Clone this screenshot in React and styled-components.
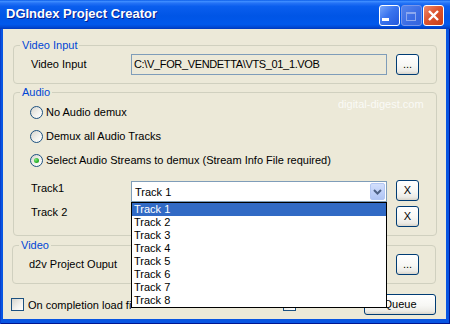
import React from "react";
import styled, { createGlobalStyle } from "styled-components";

const GlobalStyle = createGlobalStyle`
  html, body { margin: 0; padding: 0; background: #ffffff; }
  body { width: 450px; height: 324px; overflow: hidden; }
  *, *::before, *::after { box-sizing: border-box; }
`;

const Window = styled.div`
  position: relative;
  width: 450px;
  height: 324px;
  display: flex;
  flex-direction: column;
  font-family: "Liberation Sans", Arial, sans-serif;
  font-size: 11px;
  color: #000;
`;

const TitleBar = styled.div`
  height: 29px;
  flex: none;
  display: flex;
  align-items: flex-start;
  padding: 0 6px 0 6px;
  background: linear-gradient(
    180deg,
    #0A5CE8 0%,
    #3D8CFF 5%,
    #2472F6 11%,
    #0A5EEE 22%,
    #0055E6 55%,
    #0058EC 84%,
    #004AD6 93%,
    #0038BC 100%
  );
`;

const Title = styled.div`
  flex: 1;
  color: #ffffff;
  font-weight: bold;
  font-size: 13px;
  line-height: 28px;
  text-shadow: 1px 1px 0 #0A1F8E;
  white-space: nowrap;
`;

const Caption = styled.div`
  display: flex;
  gap: 1px;
  padding-top: 5px;
`;

const CapButton = styled.div`
  width: 21px;
  height: 21px;
  border-radius: 3px;
  border: 1px solid ${(p) => (p.$disabled ? "#7896EA" : "#FFFFFF")};
  background: ${(p) =>
    p.$close
      ? "linear-gradient(135deg, #EE8A6E 0%, #DD5530 45%, #C93E17 100%)"
      : p.$disabled
      ? "linear-gradient(135deg, #5584EC 0%, #3B6CE4 60%, #3364DE 100%)"
      : "linear-gradient(135deg, #78A6FA 0%, #3A74EE 45%, #2358DC 100%)"};
  display: flex;
  align-items: center;
  justify-content: center;
  svg { display: block; }
`;

const Frame = styled.div`
  flex: 1;
  display: flex;
  padding: 0 4px 5px 3px;
  background: #0855E2;
  box-shadow: inset 1px 0 0 #0A3FCC, inset -1px 0 0 #00158F, inset 0 -1px 0 #00158F;
`;

const Client = styled.div`
  flex: 1;
  background: #ECE9D8;
  display: flex;
  flex-direction: column;
  padding: 9px 9px 0 10px;
`;

const Group = styled.fieldset`
  margin: ${(p) => p.$mt || 0}px ${(p) => p.$mr || 0}px 0 ${(p) => p.$ml || 0}px;
  padding: 0;
  min-width: 0;
  border: 1px solid #D0D0BF;
  border-radius: 4px;
`;

const Legend = styled.legend`
  margin-left: 6px;
  padding: 0 2px;
  line-height: 14px;
  font-size: 11px;
  color: #0046D5;
`;

const GroupBody = styled.div`
  display: flex;
  flex-direction: column;
  padding: ${(p) => p.$pad};
`;

const FieldRow = styled.div`
  display: flex;
  align-items: center;
  height: 21px;
`;

const Label = styled.span`
  flex: none;
  width: ${(p) => p.$w || 100}px;
  line-height: 13px;
  margin-top: ${(p) => p.$mt || 0}px;
  white-space: nowrap;
`;

const TextBox = styled.div`
  flex: none;
  width: 256px;
  height: 21px;
  border: 1px solid #7F9DB9;
  background: ${(p) => (p.$readOnly ? "#ECE9D8" : "#FFFFFF")};
  padding: 0 2px;
  line-height: 19px;
  letter-spacing: -0.35px;
  white-space: nowrap;
  overflow: hidden;
`;

const XPButton = styled.button`
  flex: none;
  width: ${(p) => p.$w || 23}px;
  height: 21px;
  margin-left: ${(p) => (p.$ml === undefined ? 9 : p.$ml)}px;
  padding: 0;
  border: 1px solid #003C74;
  border-radius: 3px;
  background: linear-gradient(180deg, #FFFFFF 0%, #F7F7F4 55%, #ECEBE6 85%, #D8D4CA 100%);
  font-family: "Liberation Sans", Arial, sans-serif;
  font-size: 11px;
  line-height: 19px;
  color: #000;
  text-align: center;
`;

const RadioRow = styled.label`
  display: flex;
  align-items: center;
  gap: 3px;
  height: 24px;
  white-space: nowrap;
`;

const RadioCircle = styled.span`
  flex: none;
  width: 13px;
  height: 13px;
  border-radius: 50%;
  border: 1px solid #1C5180;
  background: linear-gradient(135deg, #D6D5CE 0%, #F3F3EF 60%, #FFFFFF 100%);
  display: flex;
  align-items: center;
  justify-content: center;
  &::after {
    content: "";
    display: ${(p) => (p.$checked ? "block" : "none")};
    width: 5px;
    height: 5px;
    border-radius: 50%;
    background: radial-gradient(circle at 35% 35%, #7EE87E 0%, #2FB52F 55%, #16881A 100%);
  }
`;

const TrackRow = styled.div`
  display: flex;
  align-items: flex-start;
  height: 22px;
  margin-top: ${(p) => p.$mt}px;
  padding-left: 1px;
`;

const ComboWrap = styled.div`
  position: relative;
  flex: none;
  width: 256px;
  margin-top: 1px;
`;

const Combo = styled.div`
  display: flex;
  align-items: center;
  height: 21px;
  border: 1px solid #7F9DB9;
  background: #FFFFFF;
  padding: 0 1px 0 3px;
`;

const ComboText = styled.span`
  flex: 1;
  white-space: nowrap;
`;

const ComboArrow = styled.span`
  flex: none;
  width: 15px;
  height: 17px;
  border-radius: 2px;
  border: 1px solid #B3C7F3;
  background: linear-gradient(180deg, #D3DFFC 0%, #BDCFF8 60%, #B0C5F4 100%);
  display: flex;
  align-items: center;
  justify-content: center;
`;

const DropList = styled.ul`
  position: absolute;
  z-index: 10;
  top: 21px;
  left: 0;
  width: 256px;
  margin: 0;
  padding: 0;
  list-style: none;
  background: #FFFFFF;
  border: 1px solid #000000;
`;

const DropItem = styled.li`
  height: 13px;
  line-height: 13px;
  padding-left: 2px;
  background: ${(p) => (p.$selected ? "#316AC5" : "transparent")};
  color: ${(p) => (p.$selected ? "#FFFFFF" : "#000000")};
  white-space: nowrap;
`;

const Watermark = styled.div`
  position: absolute;
  left: 338px;
  top: 98px;
  color: #FAFAF6;
  font-size: 11px;
  line-height: 13px;
  pointer-events: none;
`;

const BottomRow = styled.div`
  display: flex;
  align-items: center;
  height: 21px;
  margin: 10px 1px 0 -2px;
`;

const CheckOption = styled.label`
  display: flex;
  align-items: center;
  gap: 4px;
  flex: none;
  width: ${(p) => p.$w}px;
`;

const CheckBox = styled.span`
  flex: none;
  width: 13px;
  height: 13px;
  border: 1px solid #1C5180;
  background: linear-gradient(135deg, #D6D5CE 0%, #F3F3EF 60%, #FFFFFF 100%);
`;

const ClipLabel = styled.span`
  width: ${(p) => p.$w}px;
  overflow: hidden;
  white-space: nowrap;
`;

const Spacer = styled.div`
  flex: 1;
`;

const tracks = ["Track 1", "Track 2", "Track 3", "Track 4", "Track 5", "Track 6", "Track 7", "Track 8"];

export default function App() {
  return (
    <>
      <GlobalStyle />
      <Window>
        <TitleBar>
          <Title>DGIndex Project Creator</Title>
          <Caption>
            <CapButton>
              <svg width="19" height="19" viewBox="0 0 19 19">
                <rect x="2" y="12" width="7" height="3" fill="#FFFFFF" />
              </svg>
            </CapButton>
            <CapButton $disabled>
              <svg width="19" height="19" viewBox="0 0 19 19">
                <rect x="4.5" y="6.5" width="9" height="8" fill="none" stroke="#8DA8EE" strokeWidth="1" />
                <rect x="4" y="6" width="10" height="2" fill="#8DA8EE" />
              </svg>
            </CapButton>
            <CapButton $close>
              <svg width="19" height="19" viewBox="0 0 19 19">
                <path d="M5 5 L14 14 M14 5 L5 14" stroke="#FFFFFF" strokeWidth="2.4" />
              </svg>
            </CapButton>
          </Caption>
        </TitleBar>

        <Frame>
          <Client>
            <Group>
              <Legend>Video Input</Legend>
              <GroupBody $pad="2px 16px 8px 17px">
                <FieldRow>
                  <Label>Video Input</Label>
                  <TextBox $readOnly>{"C:\\V_FOR_VENDETTA\\VTS_01_1.VOB"}</TextBox>
                  <XPButton>...</XPButton>
                </FieldRow>
              </GroupBody>
            </Group>

            <Group $mt={1}>
              <Legend>Audio</Legend>
              <GroupBody $pad="1px 16px 7px 16px">
                <RadioRow>
                  <RadioCircle />
                  No Audio demux
                </RadioRow>
                <RadioRow>
                  <RadioCircle />
                  Demux all Audio Tracks
                </RadioRow>
                <RadioRow>
                  <RadioCircle $checked />
                  Select Audio Streams to demux (Stream Info File required)
                </RadioRow>
                <TrackRow $mt={8}>
                  <Label $mt={2}>Track1</Label>
                  <ComboWrap>
                    <Combo>
                      <ComboText>Track 1</ComboText>
                      <ComboArrow>
                        <svg width="9" height="6" viewBox="0 0 9 6">
                          <path d="M1 1 L4.5 4.5 L8 1" fill="none" stroke="#4D6185" strokeWidth="2" />
                        </svg>
                      </ComboArrow>
                    </Combo>
                    <DropList>
                      {tracks.map((t, i) => (
                        <DropItem key={t} $selected={i === 0}>
                          {t}
                        </DropItem>
                      ))}
                    </DropList>
                  </ComboWrap>
                  <XPButton>X</XPButton>
                </TrackRow>
                <TrackRow $mt={4}>
                  <Label>Track 2</Label>
                  <ComboWrap>
                    <Combo>
                      <ComboText />
                    </Combo>
                  </ComboWrap>
                  <XPButton>X</XPButton>
                </TrackRow>
              </GroupBody>
            </Group>

            <Group $mt={2} $ml={-1} $mr={1}>
              <Legend>Video</Legend>
              <GroupBody $pad="2px 15px 8px 16px">
                <FieldRow>
                  <Label $w={102}>d2v Project Ouput</Label>
                  <TextBox />
                  <XPButton>...</XPButton>
                </FieldRow>
              </GroupBody>
            </Group>

            <BottomRow>
              <CheckOption $w={272}>
                <CheckBox />
                <ClipLabel $w={103}>On completion load file in DGIndex</ClipLabel>
              </CheckOption>
              <CheckOption $w={20}>
                <CheckBox />
              </CheckOption>
              <Spacer />
              <XPButton $w={72} $ml={0}>Queue</XPButton>
            </BottomRow>
          </Client>
        </Frame>

        <Watermark>digital-digest.com</Watermark>
      </Window>
    </>
  );
}
